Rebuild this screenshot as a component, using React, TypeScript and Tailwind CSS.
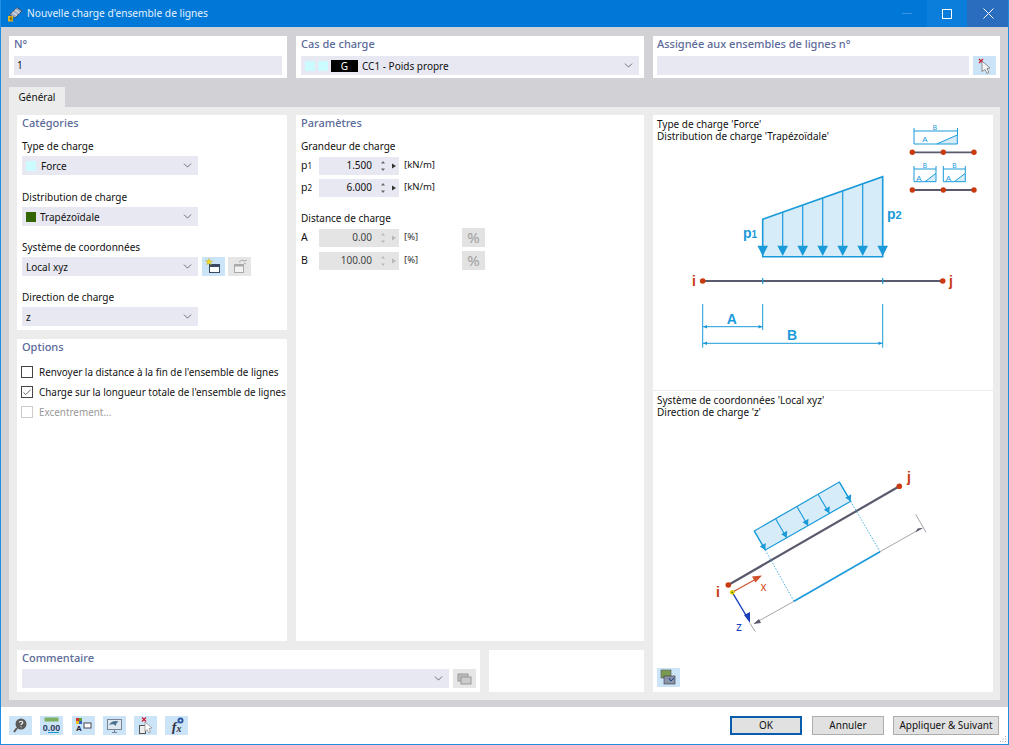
import type { ReactNode } from "react";
import { ChevronDown, Check } from "lucide-react";

const Card = ({ className = "", children }: { className?: string; children?: ReactNode }) => (
  <div className={`bg-white ${className}`}>{children}</div>
);

const Heading = ({ children }: { children: ReactNode }) => (
  <div className="text-[11px] leading-[16px] text-[#5b6a99] font-medium">{children}</div>
);

const Select = ({ children, className = "w-[176px]" }: { children?: ReactNode; className?: string }) => (
  <div className={`h-[19px] bg-[#e8e8f2] flex items-center pl-[4px] pr-[2px] shrink-0 ${className}`}>
    <div className="flex-1 flex items-center gap-[4px] min-w-0 pt-px">{children}</div>
    <ChevronDown className="w-[13px] h-[13px] text-[#555] mr-[2px]" strokeWidth={1.5} />
  </div>
);

const Field = ({ label, children, className = "h-[50px]" }: { label: string; children: ReactNode; className?: string }) => (
  <div className={className}>
    <div className="h-[19px] flex items-center text-[10px]">{label}</div>
    {children}
  </div>
);

const Spin = ({ sym, sub, value, unit, off, pct }: { sym: string; sub?: string; value: string; unit: string; off?: boolean; pct?: boolean }) => (
  <div className="flex items-center h-[19px]">
    <div className="w-[18px] text-[10.5px] leading-none">
      {sym}
      {sub && <span className="text-[8px]">{sub}</span>}
    </div>
    <div className={`w-[80px] h-[18px] flex items-center justify-end ${off ? "bg-[#e4e4e4] text-[#444]" : "bg-[#e8e8f2]"}`}>
      <span className="text-[10px]">{value}</span>
      <svg width="24" height="16" viewBox="0 0 24 16" className="ml-[3px]">
        <path d="M6 5.500 8 3 10 5.500Z M6 10.500 8 13 10 10.500Z" fill={off ? "#b8b8b8" : "#666"} />
        <path d="M17 5.500 21 8 17 10.500Z" fill={off ? "#b8b8b8" : "#333"} />
      </svg>
    </div>
    <span className={`ml-[5px] w-[58px] text-[9.5px] ${off ? "text-[#333]" : ""}`}>{unit}</span>
    {pct && (
      <div className="w-[23px] h-[19px] bg-[#e2e2e2] flex items-center justify-center text-[15px] text-[#a0a0a0]">%</div>
    )}
  </div>
);

const Box = ({ checked, off, label }: { checked?: boolean; off?: boolean; label: string }) => (
  <div className={`flex items-center h-[20px] gap-[6px] text-[9.9px] whitespace-nowrap ${off ? "text-[#999]" : ""}`}>
    <div className={`w-[12px] h-[12px] shrink-0 border flex items-center justify-center ${off ? "border-[#ccc]" : "border-[#444]"}`}>
      {checked && <Check className="w-[11px] h-[11px] text-[#444]" strokeWidth={2} />}
    </div>
    {label}
  </div>
);

const IconBtn = ({ children, off, className = "" }: { children: ReactNode; off?: boolean; className?: string }) => (
  <div className={`w-[23px] h-[19px] flex items-center justify-center shrink-0 ${off ? "bg-[#e6e6e6]" : "bg-[#cce4f7]"} ${className}`}>
    <svg width="17" height="17" viewBox="0 0 17 17">{children}</svg>
  </div>
);

const Btn = ({ children, primary, className = "w-[72px]" }: { children: ReactNode; primary?: boolean; className?: string }) => (
  <div className={`h-[19px] flex items-center justify-center text-[10px] bg-[#e1e1e1] border ${primary ? "border-2 border-[#0a5cad]" : "border-[#adadad]"} ${className}`}>
    {children}
  </div>
);

const BLUE = "#1a9ad9";
const FILL = "#d6ecf9";
const RED = "#c93a10";
const BEAM = "#5a5a6e";

const Arrow = ({ x }: { x: number }) => (
  <path d={`M${x - 5.3} 245.7H${x + 5.3}L${x} 256Z`} fill={BLUE} />
);

const MiniBeam = ({ y }: { y: number }) => (
  <g>
    <line x1="912.3" y1={y} x2="974" y2={y} stroke={BEAM} strokeWidth="1.8" />
    {[912.3, 943.3, 974].map((x) => (
      <circle key={x} cx={x} cy={y} r="2.7" fill={RED} />
    ))}
  </g>
);

const MiniLoad = ({ x }: { x: number }) => (
  <g stroke={BLUE} strokeWidth="1" fill="none">
    <path d={`M${x} 166V181.700H${x + 11} M${x + 22} 166V173 M${x} 169H${x + 22}`} />
    <path d={`M${x + 11} 181.700L${x + 22} 173.300V181.700Z`} fill={FILL} />
    <text x={x + 5} y="180.500" fontSize="8" fill={BLUE} stroke="none" textAnchor="middle">A</text>
    <text x={x + 11} y="167.500" fontSize="6.500" fill={BLUE} stroke="none" textAnchor="middle">B</text>
  </g>
);

const LoadDiagram = () => (
  <svg viewBox="653 115 340 275" className="col-start-1 row-start-1 w-[340px] h-[275px]" fontFamily="'Liberation Sans', sans-serif">
    {/* mini icons */}
    <g stroke={BLUE} strokeWidth="1" fill="none">
      <path d="M914 128V144H936.700 M957.500 128V135 M914 131H957.500" />
      <path d="M936.700 144L957.300 135V144Z" fill={FILL} />
      <text x="925" y="142" fontSize="8" fill={BLUE} stroke="none" textAnchor="middle">A</text>
      <text x="935" y="130" fontSize="6.500" fill={BLUE} stroke="none" textAnchor="middle">B</text>
    </g>
    <MiniBeam y={152.3} />
    <MiniLoad x={914} />
    <MiniLoad x={943.3} />
    <MiniBeam y={190} />

    {/* trapezoid load */}
    <path d="M762.7 219.3L882.7 176.7V256.7H762.7Z" fill={FILL} stroke={BLUE} strokeWidth="1.6" />
    {[782.7, 802.7, 822.7, 842.7, 862.7].map((x) => (
      <line key={x} x1={x} y1={219.3 - ((x - 762.7) * 42.6) / 120} x2={x} y2="250" stroke={BLUE} strokeWidth="1.2" />
    ))}
    {[762.7, 782.7, 802.7, 822.7, 842.7, 862.7, 882.7].map((x) => (
      <Arrow key={x} x={x} />
    ))}
    <text x="743" y="238" fontSize="14" fontWeight="700" fill={BLUE}>p<tspan fontSize="10">1</tspan></text>
    <text x="887" y="219" fontSize="14" fontWeight="700" fill={BLUE}>p<tspan fontSize="11">2</tspan></text>

    {/* beam */}
    <line x1="702.7" y1="281" x2="942.7" y2="281" stroke={BEAM} strokeWidth="2" />
    <circle cx="702.7" cy="281" r="2.8" fill={RED} />
    <circle cx="942.7" cy="281" r="2.8" fill={RED} />
    <path d="M762.7 278V284M882.7 278V284" stroke={BLUE} strokeWidth="1.2" />
    <text x="692" y="286" fontSize="14" fontWeight="700" fill={RED}>i</text>
    <text x="949" y="286" fontSize="14" fontWeight="700" fill={RED}>j</text>

    {/* dimensions */}
    <path d="M702.7 304V347.7M762.7 304V330M882.7 304V347.7M703 326.7H762.5M703 343.3H882.5" stroke={BLUE} strokeWidth="1" fill="none" />
    <path d="M703 326.7L707 325V328.4Z M762.5 326.7L758.5 325V328.4Z M703 343.3L707 341.6V345Z M882.5 343.3L878.5 341.6V345Z" fill={BLUE} />
    <text x="731.7" y="324" fontSize="14" fontWeight="700" fill={BLUE} textAnchor="middle">A</text>
    <text x="792" y="340" fontSize="14" fontWeight="700" fill={BLUE} textAnchor="middle">B</text>
  </svg>
);

const CoordDiagram = () => {
  const tops = [[754.3, 531], [775.7, 519], [797, 506.7], [818, 494.3], [839.3, 482]];
  const tips = [[765.3, 550], [786.7, 537.7], [808, 525.7], [829.3, 513.3], [850.7, 501.3]];
  return (
    <svg viewBox="653 391 340 301" className="col-start-1 row-start-1 w-[340px] h-[301px]" fontFamily="'Liberation Sans', sans-serif">
      <path d="M754.3 531L839.3 482L850.7 501.3L765.3 550Z" fill={FILL} stroke={BLUE} strokeWidth="1.2" />
      {tops.map((t, i) => {
        const [tx, ty] = tips[i];
        return (
          <g key={i}>
            <line x1={t[0]} y1={t[1]} x2={tx} y2={ty} stroke={BLUE} strokeWidth="1.1" />
            <path d={`M${tx} ${ty}L${tx - 5.5} ${ty - 3.5}L${tx + 0.5} ${ty - 7}Z`} fill={BLUE} />
          </g>
        );
      })}
      <line x1="728.3" y1="585" x2="899.3" y2="486.3" stroke={BEAM} strokeWidth="2.2" />
      <circle cx="728.3" cy="585" r="2.8" fill={RED} />
      <circle cx="899.3" cy="486.3" r="2.8" fill={RED} />
      <text x="716" y="597" fontSize="14" fill={RED} fontWeight="700">i</text>
      <text x="907" y="482" fontSize="14" fill={RED} fontWeight="700">j</text>
      <path d="M765.3 550L794 601.3M850.7 501.3L880 551.7" stroke={BLUE} strokeWidth="0.8" strokeDasharray="1.5 1.5" />
      <line x1="794" y1="601.3" x2="880" y2="551.7" stroke={BLUE} strokeWidth="1.6" />
      <path d="M755 623L794 601.3M880 551.7L921 528.5M915.7 514.3L926 532.3M750 623.3L755.3 631.7" stroke="#a4a4ac" strokeWidth="1" fill="none" />
      <path d="M753.3 624L759 619L761 623Z M923.3 527.7L917.5 528.5L915.5 532.5Z" fill="#5a5a6e" />
      <line x1="732.3" y1="592.3" x2="757" y2="578.5" stroke="#d0502a" strokeWidth="1.2" />
      <path d="M762 575.5L752 576.5L755.5 582.5Z" fill="#d0502a" />
      <text x="760.500" y="591" fontSize="12" fill="#d0502a">x</text>
      <line x1="732.3" y1="592.3" x2="747" y2="617" stroke="#1a3fb8" strokeWidth="1.4" />
      <path d="M750 623L744 615L750 612Z" fill="#1a3fb8" />
      <text x="736" y="631" fontSize="12" fill="#1a3fb8">z</text>
      <circle cx="732.3" cy="592.3" r="2.4" fill="#f0d000" />
      <circle cx="732.3" cy="592.3" r="0.9" fill="#2a8a2a" />
    </svg>
  );
};

const App = () => {
  return (
    <div className="relative w-[1009px] h-[745px] flex flex-col border border-[#1f8fe6] border-t-0 bg-white text-[#111] overflow-hidden" style={{ fontFamily: "'Noto Sans', 'Open Sans', sans-serif" }}>
      {/* title bar */}
      <div className="h-[27px] -mx-px bg-[#0078d7] flex items-center text-white shrink-0">
        <svg width="16" height="16" viewBox="0 0 16 16" className="ml-[7px]">
          <path d="M2.500 8.500L10 1.500L15 5L8 12Z" fill="#a4aec2" stroke="#33445c" strokeWidth="0.8" />
          <path d="M5.500 6L10 9.500M8 3.800L12.500 7" stroke="#eef2f8" strokeWidth="0.9" />
          <path d="M1 10h5v5.500H1z" fill="#e8b820" />
          <path d="M4.800 11c-2-.6-2.600 3-.6 3 1.500 0 1-2-.6-1.500" stroke="#5a4400" strokeWidth="0.8" fill="none" />
        </svg>
        <span className="ml-[4px] text-[10.2px] text-[#e6f2fc]">Nouvelle charge d'ensemble de lignes</span>
        <div className="ml-auto flex h-full">
          <div className="w-[40px] flex items-center justify-center">
            <div className="w-[10px] h-px bg-[#3d95e0]" />
          </div>
          <div className="w-[40px] flex items-center justify-center bg-[#0b7edb]">
            <div className="w-[10px] h-[10px] border border-white" />
          </div>
          <div className="w-[42px] flex items-center justify-center bg-[#2a6cbe]">
            <svg width="11" height="11" viewBox="0 0 11 11">
              <path d="M0.500 0.500L10.500 10.500M10.500 0.500L0.500 10.500" stroke="#fff" strokeWidth="1" />
            </svg>
          </div>
        </div>
      </div>

      {/* dialog body */}
      <div className="h-[680px] shrink-0 bg-[#d2d2d6] pl-[8px] pr-[8px] pt-[9px] flex flex-col">
        <div className="flex gap-[9px] h-[42px]">
          <Card className="w-[278px] px-[5px]">
            <Heading>N°</Heading>
            <div className="mt-[4px] h-[19px] bg-[#e8e8f2] px-[3px] flex items-center text-[10px]">1</div>
          </Card>
          <Card className="w-[348px] px-[5px]">
            <Heading>Cas de charge</Heading>
            <div className="mt-[4px]">
              <Select className="w-full">
                <div className="flex gap-[3px] items-center">
                  <div className="w-[10px] h-[10px] bg-[#ccfbff]" />
                  <div className="w-[10px] h-[10px] bg-[#ccfbff]" />
                  <div className="w-[27px] h-[12px] bg-black text-white text-[10px] leading-[12px] text-center">G</div>
                </div>
                <span className="text-[10px]">CC1 - Poids propre</span>
              </Select>
            </div>
          </Card>
          <Card className="w-[347px] px-[4px]">
            <Heading>Assignée aux ensembles de lignes n°</Heading>
            <div className="mt-[4px] flex gap-[4px]">
              <div className="w-[312px] h-[19px] bg-[#e8e8f2]" />
              <IconBtn>
                <path d="M3 2l4 4M7 2L3 6" stroke="#d02030" strokeWidth="1.300" />
                <path d="M6 4l8 7-3 .5 2 4-2 1-2-4-3 2z" fill="#f4f4f4" stroke="#777" strokeWidth="0.8" />
              </IconBtn>
            </div>
          </Card>
        </div>

        {/* tab */}
        <div className="mt-[9px] h-[20px] w-[56px] bg-[#ececec] flex items-center justify-center text-[10px]">Général</div>

        {/* tab panel */}
        <div className="w-[991px] h-[593px] bg-[#ececec] p-[8px] flex gap-[9px]">
          <div className="w-[627px] flex flex-col gap-[9px]">
            <div className="h-[526px] flex gap-[9px]">
              <div className="w-[270px] flex flex-col gap-[9px]">
                <Card className="h-[215px] px-[5px]">
                  <Heading>Catégories</Heading>
                  <div className="mt-[6px]">
                    <Field label="Type de charge" className="h-[51px]">
                      <Select>
                        <div className="w-[10px] h-[10px] bg-[#ccfbff]" />
                        <span className="text-[10px] ml-[1px]">Force</span>
                      </Select>
                    </Field>
                    <Field label="Distribution de charge">
                      <Select>
                        <div className="w-[10px] h-[10px] bg-[#336600]" />
                        <span className="text-[10px]">Trapézoïdale</span>
                      </Select>
                    </Field>
                    <Field label="Système de coordonnées">
                      <div className="flex">
                        <Select>
                          <span className="text-[10px]">Local xyz</span>
                        </Select>
                        <IconBtn className="ml-[4px]">
                          <rect x="4.500" y="6.500" width="10" height="8" fill="#fff" stroke="#3a4a60" />
                          <rect x="4.500" y="6.500" width="10" height="2.500" fill="#3a4a60" />
                          <path d="M4 0.500l1 2.400 2.500.2-2 1.600.7 2.400L4 5.300 1.800 6.600l.7-2.400-2-1.600L3 2.900z" fill="#f2e020" stroke="#b8a010" strokeWidth="0.4" />
                        </IconBtn>
                        <IconBtn off className="ml-[3px]">
                          <rect x="3.500" y="6.500" width="9" height="8" fill="#f2f2f2" stroke="#aaa" />
                          <rect x="3.500" y="6.500" width="9" height="2" fill="#aaa" />
                          <path d="M8 4l3-2 2 1 3-1M13 5l2 1" stroke="#aaa" fill="none" />
                        </IconBtn>
                      </div>
                    </Field>
                    <Field label="Direction de charge">
                      <Select>
                        <span className="text-[10px]">z</span>
                      </Select>
                    </Field>
                  </div>
                </Card>
                <Card className="flex-1 px-[4px]">
                  <div className="pl-px"><Heading>Options</Heading></div>
                  <div className="mt-[7px]">
                    <Box label="Renvoyer la distance à la fin de l'ensemble de lignes" />
                    <Box checked label="Charge sur la longueur totale de l'ensemble de lignes" />
                    <Box off label="Excentrement..." />
                  </div>
                </Card>
              </div>
              <Card className="w-[348px] px-[5px]">
                <Heading>Paramètres</Heading>
                <div className="mt-[6px] h-[19px] flex items-center text-[10px]">Grandeur de charge</div>
                <div className="flex flex-col gap-[3px]">
                  <Spin sym="p" sub="1" value="1.500" unit="[kN/m]" />
                  <Spin sym="p" sub="2" value="6.000" unit="[kN/m]" />
                </div>
                <div className="mt-[12px] h-[19px] flex items-center text-[10px]">Distance de charge</div>
                <div className="flex flex-col gap-[4px]">
                  <Spin sym="A" value="0.00" unit="[%]" off pct />
                  <Spin sym="B" value="100.00" unit="[%]" off pct />
                </div>
              </Card>
            </div>
            <div className="flex-1 flex gap-[9px]">
              <Card className="w-[463px] px-[5px]">
                <Heading>Commentaire</Heading>
                <div className="mt-[3px] flex gap-[4px]">
                  <Select className="w-[427px]" />
                  <IconBtn off>
                    <rect x="2" y="4" width="10" height="7" fill="#bbb" stroke="#999" />
                    <rect x="5" y="7" width="10" height="7" fill="#ccc" stroke="#999" />
                  </IconBtn>
                </div>
              </Card>
              <Card className="w-[155px]" />
            </div>
          </div>

          {/* right preview */}
          <Card className="w-[340px] flex flex-col">
            <div className="h-[275px] grid border-b border-[#ececec] box-content">
              <div className="col-start-1 row-start-1 pl-[4px] pt-[3px] text-[10px] leading-[12px]">
                <div>Type de charge 'Force'</div>
                <div>Distribution de charge 'Trapézoïdale'</div>
              </div>
              <LoadDiagram />
            </div>
            <div className="flex-1 grid">
              <div className="col-start-1 row-start-1 pl-[4px] pt-[3px] text-[10px] leading-[12px]">
                <div>Système de coordonnées 'Local xyz'</div>
                <div>Direction de charge 'z'</div>
              </div>
              <CoordDiagram />
              <div className="col-start-1 row-start-1 self-end pl-[4px] pb-[5px] z-10">
                <IconBtn>
                  <rect x="1" y="1" width="10" height="8" fill="#7a9a50" stroke="#556" strokeWidth="0.6" />
                  <rect x="4" y="7" width="11" height="8" fill="#8a94a8" stroke="#334" strokeWidth="0.6" />
                  <path d="M9 9l2 3 3-3" stroke="#123a80" fill="none" />
                </IconBtn>
              </div>
            </div>
          </Card>
        </div>
      </div>

      {/* footer */}
      <div className="flex-1 flex items-center pl-[8px] pr-[9px] pb-[1px]">
        <div className="flex gap-[8.3px]">
          <IconBtn>
            <circle cx="9" cy="7" r="5.500" fill="#5a5a5a" />
            <path d="M5 11l-3 4" stroke="#5a5a5a" strokeWidth="2" />
            <path d="M7.200 5.500c.3-1.600 3.600-1.600 3.600 0 0 1.300-1.800 1.300-1.800 2.500M9 9.200v1" stroke="#fff" strokeWidth="1.100" fill="none" />
          </IconBtn>
          <IconBtn>
            <rect x="1.500" y="0.500" width="14" height="4" fill="#7cb060" />
            <text x="8.500" y="13.500" fontSize="9" fontWeight="700" fill="#2a3a60" textAnchor="middle" fontFamily="'Liberation Sans', sans-serif">0.00</text>
            <path d="M5 15.500h11" stroke="#1a9ad9" />
          </IconBtn>
          <IconBtn>
            <rect x="1" y="1" width="3" height="3" fill="#d03030" />
            <rect x="4" y="1" width="3" height="3" fill="#60a030" />
            <rect x="1" y="4" width="3" height="3" fill="#e8c020" />
            <rect x="4" y="4" width="3" height="3" fill="#3060c0" />
            <text x="4" y="14" fontSize="8" fontWeight="700" fill="#223" textAnchor="middle" fontFamily="'Liberation Sans', sans-serif">A</text>
            <rect x="9" y="6" width="7" height="5" fill="#fff" stroke="#445" />
          </IconBtn>
          <IconBtn>
            <rect x="1.500" y="2.500" width="14" height="10" fill="#dfe8f0" stroke="#7a8494" />
            <path d="M3 8c2-4 7-5 10-3-2 0-3 1-3 4-2-2-4-2-7-1z" fill="#4a7090" />
            <path d="M8.500 12.500v3M6 15.500h5" stroke="#7a8494" />
          </IconBtn>
          <IconBtn>
            <path d="M5 0.500l4 4M9 0.500l-4 4" stroke="#d02030" strokeWidth="1.300" />
            <rect x="2.500" y="8.500" width="6" height="8" fill="#eee" stroke="#555" />
            <path d="M8 5l7 6-3 .5 1.500 3.500-1.500 1-2-3.500-2 2z" fill="#fff" stroke="#888" strokeWidth="0.7" />
          </IconBtn>
          <IconBtn>
            <text x="6" y="15" fontSize="14" fontStyle="italic" fontWeight="700" fill="#334" textAnchor="middle" fontFamily="'Liberation Serif', serif">f</text>
            <text x="11" y="15" fontSize="10" fontStyle="italic" fontWeight="700" fill="#334" textAnchor="middle" fontFamily="'Liberation Serif', serif">x</text>
            <circle cx="12.500" cy="3.500" r="3" fill="#2a5aa0" />
            <circle cx="12.500" cy="3.500" r="1" fill="#fff" />
          </IconBtn>
        </div>
        <div className="ml-auto flex gap-[10px]">
          <Btn primary>OK</Btn>
          <Btn>Annuler</Btn>
          <Btn className="w-[106px] -ml-px">Appliquer & Suivant</Btn>
        </div>
      </div>

      {/* resize grip */}
      <svg width="8" height="8" viewBox="0 0 8 8" className="absolute right-px bottom-px">
        <path d="M6 1h1v1H6zM3.500 3.500h1v1h-1zM6 3.500h1v1H6zM1 6h1v1H1zM3.500 6h1v1h-1zM6 6h1v1H6z" fill="#a8a8a8" />
      </svg>
    </div>
  );
};

export default App;
